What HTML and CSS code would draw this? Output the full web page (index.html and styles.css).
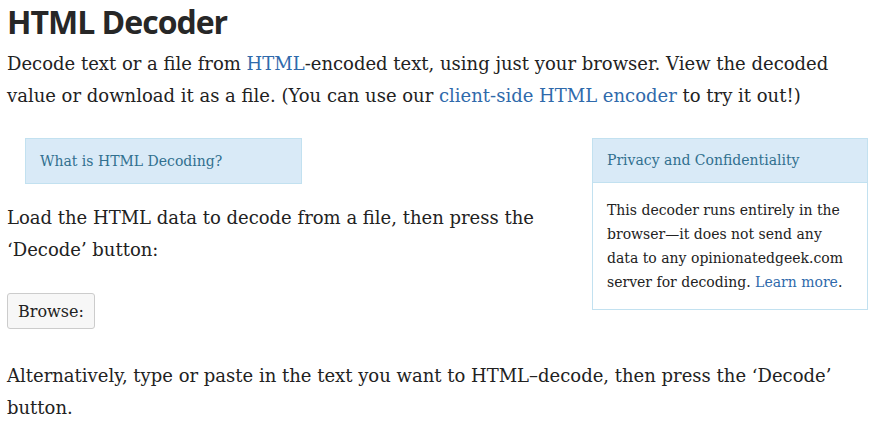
FILE: index.html
```html
<!DOCTYPE html>
<html>
<head>
<meta charset="utf-8">
<link rel="stylesheet" href="styles.css">
</head>
<body>
<h1 class="title">HTML Decoder</h1>
<p class="lead">Decode text or a file from <a href="#">HTML</a>-encoded text, using just your browser. View the decoded value or download it as a file. (You can use our <a href="#">client-side HTML encoder</a> to try it out!)</p>
<div class="row">
  <div class="main">
    <div class="info-box">What is HTML Decoding?</div>
    <p class="text">Load the HTML data to decode from a file, then press the ‘Decode’ button:</p>
    <button class="browse">Browse:</button>
  </div>
  <aside class="panel">
    <div class="panel-head">Privacy and Confidentiality</div>
    <div class="panel-body">This decoder runs entirely in the browser—it does not send any data to any opinionatedgeek.com server for decoding. <a href="#">Learn more</a>.</div>
  </aside>
</div>
<p class="text alt">Alternatively, type or paste in the text you want to HTML–decode, then press the ‘Decode’ button.</p>
</body>
</html>
```
FILE: styles.css
```css
html, body { margin: 0; padding: 0; background: #fff; }
body {
  padding: 0 7px;
  font-family: "DejaVu Serif", serif;
  color: #222;
  font-size: 18px;
  line-height: 32px;
}
a { color: #2f6aab; text-decoration: none; }
.title {
  font-family: "Open Sans", sans-serif;
  font-weight: 700;
  font-size: 32px;
  line-height: 44px;
  margin: 0;
  color: #272727;
  letter-spacing: -1px;
}
.lead { margin: 4px 0 0; }
.row { display: flex; justify-content: space-between; margin-top: 26px; }
.main { width: 560px; }
.info-box {
  margin-left: 18px;
  width: 261px;
  height: 44px;
  background: #d9eaf7;
  border: 1px solid #c2e1f0;
  color: #31708f;
  font-size: 14px;
  line-height: 44px;
  padding-left: 14px;
}
.text { margin: 0; }
.main .text { margin-top: 18px; }
.browse {
  display: block;
  margin-top: 27px;
  font-family: "DejaVu Serif", serif;
  font-size: 16px;
  color: #222;
  background: #f7f7f7;
  border: 1px solid #ccc;
  border-radius: 3px;
  padding: 0 10px;
  height: 36px;
}
.panel {
  width: 274px;
  border: 1px solid #c2e1f0;
  align-self: flex-start;
}
.panel-head {
  background: #d9eaf7;
  color: #31708f;
  font-size: 14px;
  line-height: 43px;
  height: 43px;
  padding-left: 14px;
  border-bottom: 1px solid #c2e1f0;
}
.panel-body {
  font-size: 14px;
  line-height: 24px;
  padding: 15px 14px 15px 14px;
}
.alt { margin-top: 31px; }
```
